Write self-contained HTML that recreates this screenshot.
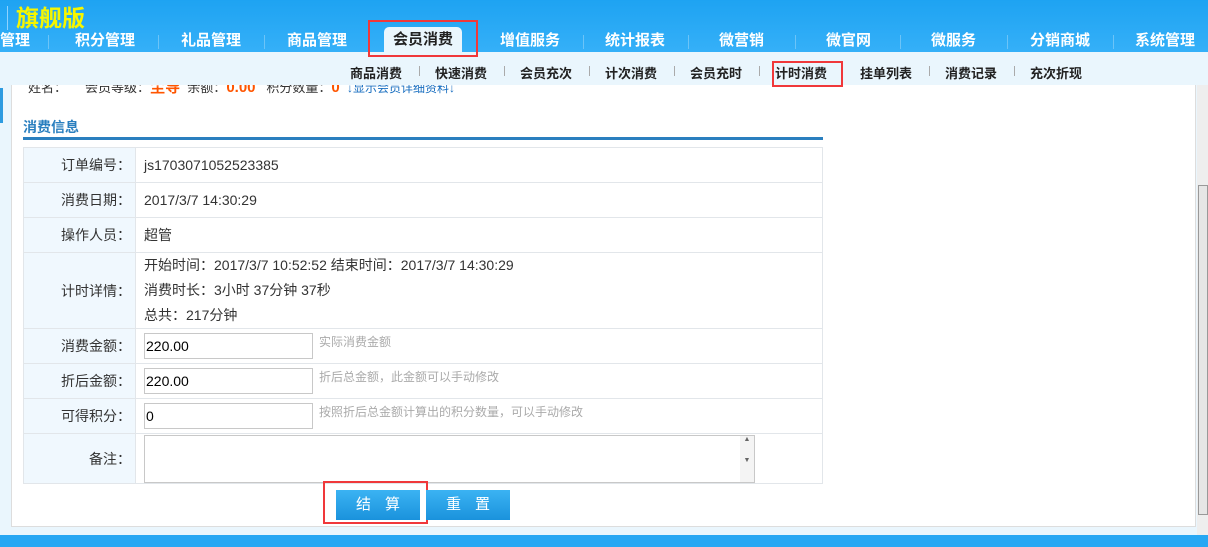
<!DOCTYPE html>
<html><head><meta charset="utf-8"><style>
*{margin:0;padding:0;box-sizing:border-box}
body{width:1208px;height:547px;overflow:hidden;position:relative;background:#eaf6fd;font-family:"Liberation Sans","Noto Sans CJK SC",sans-serif;font-size:13px;color:#333}
.top{position:absolute;left:0;top:0;width:1208px;height:52px;background:linear-gradient(#1ea3f2,#35b0f8)}
.strip{position:absolute;left:0;top:52px;width:1208px;height:33px;background:#eaf6fd}
.logo{position:absolute;left:16px;top:4px;font-size:23px;color:#f6f600;font-weight:bold;line-height:28px}
.logo:before{content:"";position:absolute;left:-9px;top:2px;width:1px;height:24px;background:#8fd3ff}
.nav{position:absolute;top:31px;height:21px;font-size:15px;font-weight:bold;color:#fff;line-height:20px}
.sep{position:absolute;top:35px;width:1px;height:14px;background:#6cc4f8}
.act{position:absolute;left:384px;top:27px;width:78px;height:25px;background:#eaf6fd;border-radius:5px 5px 0 0;color:#222;font-size:15px;font-weight:bold;text-align:center;line-height:26px}
.red{position:absolute;border:2px solid #f0383a}
.sub{position:absolute;top:63px;font-size:13px;font-weight:bold;color:#222}
.ssep{position:absolute;top:66px;width:1px;height:10px;background:#aaa}
.panel{position:absolute;left:11px;top:85px;width:1185px;height:442px;background:#fff;border:1px solid #ddd;border-top:none}
.leftbar{position:absolute;left:0;top:88px;width:3px;height:35px;background:#2d9be0}
.info{position:absolute;top:76px;left:28px;font-size:13px;color:#333;white-space:nowrap}
table{position:absolute;left:23px;top:147px;width:800px;border-collapse:collapse}
td{border:1px solid #e2e6ea;font-size:14px;color:#333;vertical-align:middle}
td.l{width:112px;background:#f0f8fe;text-align:right;padding-right:4px}
td.r{padding-left:8px}
input{width:169px;height:26px;border:1px solid #c8c8c8;font-size:14px;padding-left:1px;font-family:"Liberation Sans",sans-serif;color:#000;vertical-align:middle}
.hint{color:#aaa;font-size:12px;margin-left:6px;vertical-align:top}
.btn{position:absolute;top:490px;width:84px;height:30px;background:linear-gradient(#3bb3f3,#1a92dc);color:#fff;font-size:15px;text-align:center;line-height:30px;letter-spacing:14px;text-indent:14px}
.sb{position:absolute;left:1197px;top:85px;width:11px;height:450px;background:#eee}
.thumb{position:absolute;left:1198px;top:185px;width:10px;height:330px;background:#e6e6e6;border:1px solid #999}
.bot{position:absolute;left:0;top:535px;width:1208px;height:12px;background:#27a7f3}
</style></head><body>
<div class="panel"></div>
<div class="info">姓名：&nbsp;&nbsp;&nbsp;&nbsp;&nbsp;会员等级：<b style="color:#f50;font-size:15px">尘导</b>&nbsp;&nbsp;余额：<b style="color:#f50;font-size:15px">0.00</b>&nbsp;&nbsp;&nbsp;积分数量：<b style="color:#f50;font-size:15px">0</b>&nbsp;&nbsp;<span style="color:#1a6fc0;font-size:12px">↓显示会员详细资料↓</span></div>
<div class="strip"></div>
<div class="top"></div>
<div class="logo">旗舰版</div>
<div class="nav" style="left:0">管理</div><div class="sep" style="left:48px"></div>
<div class="nav" style="left:75px">积分管理</div><div class="sep" style="left:158px"></div>
<div class="nav" style="left:181px">礼品管理</div><div class="sep" style="left:264px"></div>
<div class="nav" style="left:287px">商品管理</div>
<div class="act">会员消费</div>
<div class="red" style="left:368px;top:20px;width:110px;height:37px"></div>
<div class="nav" style="left:500px">增值服务</div><div class="sep" style="left:583px"></div>
<div class="nav" style="left:605px">统计报表</div><div class="sep" style="left:688px"></div>
<div class="nav" style="left:719px">微营销</div><div class="sep" style="left:795px"></div>
<div class="nav" style="left:826px">微官网</div><div class="sep" style="left:900px"></div>
<div class="nav" style="left:931px">微服务</div><div class="sep" style="left:1007px"></div>
<div class="nav" style="left:1030px">分销商城</div><div class="sep" style="left:1113px"></div>
<div class="nav" style="left:1135px">系统管理</div>

<div class="sub" style="left:350px">商品消费</div><div class="ssep" style="left:419px"></div>
<div class="sub" style="left:435px">快速消费</div><div class="ssep" style="left:504px"></div>
<div class="sub" style="left:520px">会员充次</div><div class="ssep" style="left:589px"></div>
<div class="sub" style="left:605px">计次消费</div><div class="ssep" style="left:674px"></div>
<div class="sub" style="left:690px">会员充时</div><div class="ssep" style="left:759px"></div>
<div class="sub" style="left:775px">计时消费</div>
<div class="red" style="left:772px;top:61px;width:71px;height:26px"></div>
<div class="sub" style="left:860px">挂单列表</div><div class="ssep" style="left:929px"></div>
<div class="sub" style="left:945px">消费记录</div><div class="ssep" style="left:1014px"></div>
<div class="sub" style="left:1030px">充次折现</div>

<div class="leftbar"></div>
<div style="position:absolute;left:23px;top:117px;font-size:14px;font-weight:bold;color:#2a7fbf">消费信息</div>
<div style="position:absolute;left:23px;top:137px;width:800px;height:3px;background:#2a7fbf"></div>
<table>
<tr style="height:35px"><td class="l">订单编号：</td><td class="r">js1703071052523385</td></tr>
<tr style="height:35px"><td class="l">消费日期：</td><td class="r">2017/3/7 14:30:29</td></tr>
<tr style="height:35px"><td class="l">操作人员：</td><td class="r">超管</td></tr>
<tr style="height:75px"><td class="l">计时详情：</td><td class="r" style="line-height:25px">开始时间：2017/3/7 10:52:52 结束时间：2017/3/7 14:30:29<br>消费时长：3小时 37分钟 37秒<br>总共：217分钟</td></tr>
<tr style="height:35px"><td class="l">消费金额：</td><td class="r"><input value="220.00"><span class="hint">实际消费金额</span></td></tr>
<tr style="height:35px"><td class="l">折后金额：</td><td class="r"><input value="220.00"><span class="hint">折后总金额，此金额可以手动修改</span></td></tr>
<tr style="height:35px"><td class="l">可得积分：</td><td class="r"><input value="0"><span class="hint">按照折后总金额计算出的积分数量，可以手动修改</span></td></tr>
<tr style="height:50px"><td class="l">备注：</td><td class="r" style="padding-top:0"><div style="width:611px;height:48px;border:1px solid #c8c8c8;position:relative"><div style="position:absolute;right:0;top:0;width:14px;height:46px;background:#f4f4f4;font-size:7px;color:#666;text-align:center">▲<br><br><br>▼</div></div></td></tr>
</table>
<div class="btn" style="left:336px">结算</div>
<div class="red" style="left:323px;top:481px;width:105px;height:43px"></div>
<div class="btn" style="left:426px">重置</div>
<div class="sb"></div><div class="thumb"></div>
<div class="bot"></div>
</body></html>
